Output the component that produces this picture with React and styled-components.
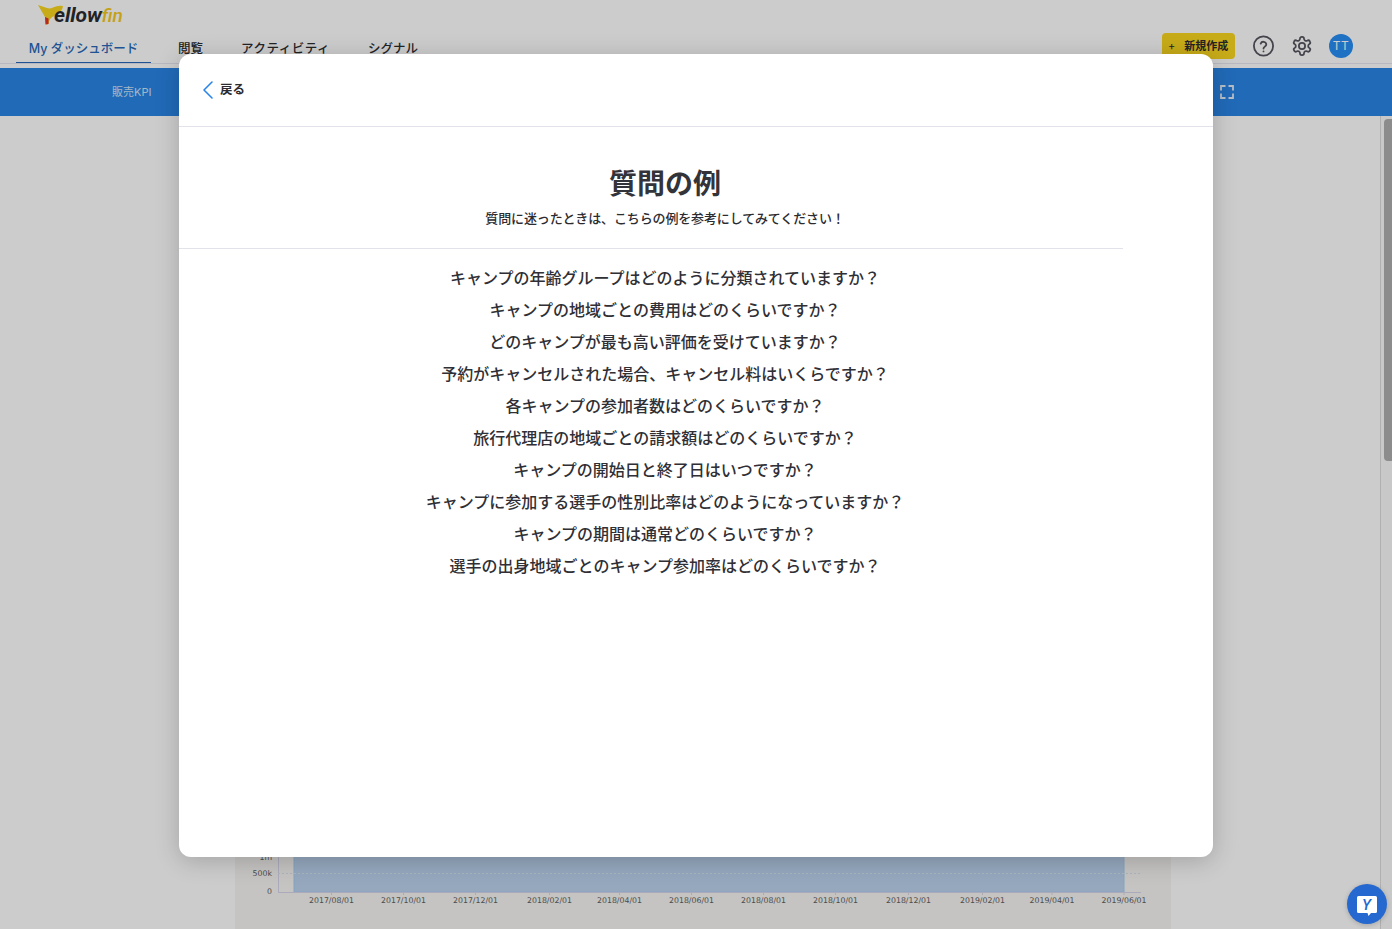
import React from 'react';
import styled, { createGlobalStyle } from 'styled-components';

const Global = createGlobalStyle`
  html, body { margin: 0; height: 100%; background: #fff; overflow: hidden; }
  body { font-family: "Inter", "Noto Sans CJK JP", sans-serif; }
  #root { height: 100%; }
`;
const Page = styled.div`
  height: 929px; display: flex; flex-direction: column; position: relative; overflow: hidden;
`;
const Header = styled.header`
  height: 63px; flex: none; display: flex; justify-content: space-between; border-bottom: 1px solid #e6e6f0; box-sizing: content-box;
`;
const HeaderLeft = styled.div`
  display: flex; flex-direction: column; padding-left: 16px;
`;
const LogoRow = styled.div`
  height: 33px; display: flex; align-items: flex-start; padding: 4px 0 0 22px; box-sizing: border-box;
`;
const LogoWord = styled.span`
  font: italic 700 21px/22px "Roboto", sans-serif; color: #2b2b30; margin-left: -9px; letter-spacing: -0.1px;
`;
const LogoFin = styled.span`
  color: #f6c91b; font-weight: 500; font-size: 19px; letter-spacing: 0;
`;
const Nav = styled.nav`
  display: flex; height: 31px;
`;
const NavItem = styled.a`
  display: flex; align-items: center; justify-content: center; white-space: nowrap;
  font: 500 12.5px/16px "Inter", "Noto Sans CJK JP", sans-serif;
  letter-spacing: ${p => p.$spacing || 0}px;
  color: ${p => p.$active ? '#2768b8' : '#2c2c30'};
  width: ${p => p.$w}px; margin-right: ${p => p.$gap}px; height: 31px; padding-top: 4px; box-sizing: border-box;
  border-bottom: ${p => p.$active ? '1px solid #2768b8' : '1px solid transparent'};
`;
const HeaderRight = styled.div`
  display: flex; align-items: center; gap: 16px; padding: 33px 39px 4px 0; height: 26px;
`;
const NewButton = styled.button`
  height: 26px; width: 73px; border: 0; border-radius: 4px; background: #f9d61f; color: #2c2c30; padding: 0 0 0 6px;
  font: 700 11px/26px "Inter", "Noto Sans CJK JP", sans-serif; display: flex; gap: 9px; align-items: center; margin-right: 2px;
`;
const Plus = styled.span`
  font-weight: 400;
`;
const Avatar = styled.div`
  width: 24px; height: 24px; border-radius: 50%; background: #278ef5; color: #fff; font: 400 12px/24px "Inter", sans-serif; text-align: center; letter-spacing: 0.5px;
`;
const IconWrap = styled.div`
  display: flex; width: 22px; height: 22px; color: #55555f;
`;
const BlueBar = styled.div`
  margin-top: 4px; height: 48px; flex: none; background: #2a85e6; display: flex; align-items: center; justify-content: space-between; padding: 0 158px 0 112px; color: #fff;
`;
const KpiLabel = styled.span`
  font: 400 11px/14px "Inter", "Noto Sans CJK JP", sans-serif; color: #cfe4fa;
`;
const Main = styled.main`
  flex: 1; display: flex; min-height: 0; background: #fff;
`;
const Content = styled.div`
  flex: 1; display: flex; padding-left: 235px;
`;
const ChartPanel = styled.section`
  width: 936px; align-self: flex-end; background: #f7f6f3;
`;
const Scrollbar = styled.div`
  width: 12px; flex: none; box-sizing: border-box; border-left: 1px solid #dcdcdc; background: #fbfbfb; padding: 3px 0 0 3px;
`;
const Thumb = styled.div`
  width: 8px; height: 342px; background: #b0b0b0; border-radius: 4px 0 0 4px;
`;
const Backdrop = styled.div`
  position: absolute; inset: 0; background: rgba(0, 0, 0, 0.2);
`;
const Modal = styled.div`
  position: absolute; left: 179px; top: 54px; width: 1034px; height: 803px; background: #fff; border-radius: 12px;
  box-shadow: 0 4px 24px rgba(0,0,0,0.2); display: flex; flex-direction: column; overflow: hidden;
`;
const ModalTop = styled.div`
  height: 72px; flex: none; display: flex; align-items: center; padding-left: 23px; gap: 6px; border-bottom: 1px solid #e2e2ea;
`;
const BackText = styled.span`
  font: 700 12.5px/16px "Inter", "Noto Sans CJK JP", sans-serif; color: #2c2c30;
`;
const Body = styled.div`
  width: 944px; flex: 1; display: flex; flex-direction: column;
`;
const Intro = styled.div`
  height: 122px; flex: none; box-sizing: border-box; padding: 37px 0 0 28px; text-align: center; border-bottom: 1px solid #e2e2ea;
`;
const Title = styled.h1`
  margin: 0; font: 700 28px/40px "Inter", "Noto Sans CJK JP", sans-serif; color: #33333a;
`;
const Subtitle = styled.p`
  margin: 5px 0 0; font: 500 13px/18px "Inter", "Noto Sans CJK JP", sans-serif; letter-spacing: -0.14px; color: #2c2c30;
`;
const Questions = styled.ul`
  list-style: none; margin: 0; padding: 13px 0 0 28px; text-align: center;
`;
const Question = styled.li`
  font: 500 16px/32px "Inter", "Noto Sans CJK JP", sans-serif; color: #2f2f35; height: 32px;
`;
const ChatButton = styled.button`
  position: absolute; right: 5px; bottom: 5px; width: 40px; height: 40px; border-radius: 50%; border: 0; padding: 0; background: #2568d0;
  display: flex; align-items: center; justify-content: center; box-shadow: 0 1px 5px rgba(0,0,0,.2);
`;

const Logo = () => (
  <svg width="25" height="21" viewBox="0 0 25 21">
    <path d="M0 1 L9 4 Q12 5 15 3.5 Q20 1 25 2 Q24.5 8 16 12 Q11 14 10.5 20 L8 20.5 L7 13 Z" fill="#f9d61f" />
    <path d="M7 13 L10.5 14.5 L10.5 20 L7.5 20.5 Z" fill="#e5332a" />
  </svg>
);
const Help = () => (
  <svg width="22" height="22" viewBox="0.5 0 22 22" fill="none" stroke="currentColor" strokeWidth="1.8" strokeLinecap="round">
    <circle cx="11" cy="11" r="9.6" />
    <path d="M8.2 8.6a2.9 2.9 0 0 1 5.6.9c0 1.9-2.8 2.3-2.8 4" />
    <path d="M11 16.3v.1" />
  </svg>
);
const Gear = () => (
  <svg width="22" height="22" viewBox="0 0 24 24" fill="none" stroke="currentColor" strokeWidth="1.9" strokeLinecap="round" strokeLinejoin="round">
    <circle cx="12" cy="12" r="3.4" />
    <path d="M12.2 2h-.4a2 2 0 0 0-2 2v.2a2 2 0 0 1-1 1.7l-.4.3a2 2 0 0 1-2 0l-.2-.1a2 2 0 0 0-2.7.7l-.2.4a2 2 0 0 0 .7 2.7l.2.1a2 2 0 0 1 1 1.7v.5a2 2 0 0 1-1 1.8l-.2.1a2 2 0 0 0-.7 2.7l.2.4a2 2 0 0 0 2.7.7l.2-.1a2 2 0 0 1 2 0l.4.3a2 2 0 0 1 1 1.7v.2a2 2 0 0 0 2 2h.4a2 2 0 0 0 2-2v-.2a2 2 0 0 1 1-1.7l.4-.3a2 2 0 0 1 2 0l.2.1a2 2 0 0 0 2.7-.7l.2-.4a2 2 0 0 0-.7-2.7l-.2-.1a2 2 0 0 1-1-1.8v-.5a2 2 0 0 1 1-1.7l.2-.1a2 2 0 0 0 .7-2.7l-.2-.4a2 2 0 0 0-2.7-.7l-.2.1a2 2 0 0 1-2 0l-.4-.3a2 2 0 0 1-1-1.7V4a2 2 0 0 0-2-2z" />
  </svg>
);
const Expand = () => (
  <svg width="14" height="14" viewBox="0 0 14 14" fill="none" stroke="#e4eefa" strokeWidth="1.8">
    <path d="M1 5.500V1h4.500M8.500 1H13v4.500M13 8.500V13H8.500M5.500 13H1V8.500" />
  </svg>
);
const Chevron = () => (
  <svg width="12" height="20" viewBox="0 0 12 20" fill="none" stroke="#2a85e6" strokeWidth="1.6" strokeLinecap="round" strokeLinejoin="round">
    <path d="M10 2 2 10l8 8" />
  </svg>
);
const ChatIcon = () => (
  <svg width="22" height="22" viewBox="0 0 22 22" style={{ marginTop: 3 }}>
    <path d="M2.500 1h17a1.500 1.500 0 0 1 1.500 1.500v14a1.500 1.500 0 0 1-1.500 1.500H15l-2.500 3-1-3h-9A1.500 1.500 0 0 1 1 16.500v-14A1.500 1.500 0 0 1 2.500 1z" fill="#fff" />
    <text x="10.5" y="15" textAnchor="middle" fontFamily="Roboto, sans-serif" fontStyle="italic" fontWeight="500" fontSize="15" fill="#2568d0">Y</text>
  </svg>
);

const dates = [
  ['2017/08/01', 96.5], ['2017/10/01', 168.5], ['2017/12/01', 240.5], ['2018/02/01', 314.5], ['2018/04/01', 384.5],
  ['2018/06/01', 456.5], ['2018/08/01', 528.5], ['2018/10/01', 600.5], ['2018/12/01', 673.5], ['2019/02/01', 747.5],
  ['2019/04/01', 817], ['2019/06/01', 889],
];
const Chart = () => (
  <svg width="936" height="813" viewBox="0 0 936 813" style={{ display: 'block' }}>
    <line x1="43.5" y1="700" x2="43.5" y2="776.5" stroke="#d5d5ea" />
    <rect x="59" y="700" width="830" height="76" fill="#bbd3ee" stroke="#a8cdf3" />
    <line x1="43" y1="757.5" x2="906" y2="757.5" stroke="#d5e3ef" strokeDasharray="2 2" />
    <line x1="43" y1="776.5" x2="906" y2="776.5" stroke="#d5d5ea" />
    {dates.map(([d, x]) => <line key={d} x1={x} y1="776" x2={x} y2="779" stroke="#d5d5ea" />)}
    <g fontFamily="DejaVu Sans, sans-serif" fontSize="7.8" fill="#5f5f5f">
      <text x="37" y="744" textAnchor="end">1m</text>
      <text x="37" y="760" textAnchor="end">500k</text>
      <text x="37" y="778" textAnchor="end">0</text>
      {dates.map(([d, x]) => <text key={d} x={x} y="787" textAnchor="middle">{d}</text>)}
    </g>
  </svg>
);

const questions = [
  'キャンプの年齢グループはどのように分類されていますか？',
  'キャンプの地域ごとの費用はどのくらいですか？',
  'どのキャンプが最も高い評価を受けていますか？',
  '予約がキャンセルされた場合、キャンセル料はいくらですか？',
  '各キャンプの参加者数はどのくらいですか？',
  '旅行代理店の地域ごとの請求額はどのくらいですか？',
  'キャンプの開始日と終了日はいつですか？',
  'キャンプに参加する選手の性別比率はどのようになっていますか？',
  'キャンプの期間は通常どのくらいですか？',
  '選手の出身地域ごとのキャンプ参加率はどのくらいですか？',
];

export default function App() {
  return (
    <Page>
      <Global />
      <Header>
        <HeaderLeft>
          <LogoRow>
            <Logo />
            <LogoWord>ellow<LogoFin>fin</LogoFin></LogoWord>
          </LogoRow>
          <Nav>
            <NavItem $active $w={135} $gap={27}>My ダッシュボード</NavItem>
            <NavItem $w={25} $gap={38}>閲覧</NavItem>
            <NavItem $w={89} $gap={38} $spacing={0.5}>アクティビティ</NavItem>
            <NavItem $w={50} $gap={0}>シグナル</NavItem>
          </Nav>
        </HeaderLeft>
        <HeaderRight>
          <NewButton><Plus>+</Plus><span>新規作成</span></NewButton>
          <IconWrap><Help /></IconWrap>
          <IconWrap><Gear /></IconWrap>
          <Avatar>TT</Avatar>
        </HeaderRight>
      </Header>
      <BlueBar>
        <KpiLabel>販売KPI</KpiLabel>
        <Expand />
      </BlueBar>
      <Main>
        <Content>
          <ChartPanel><Chart /></ChartPanel>
        </Content>
        <Scrollbar><Thumb /></Scrollbar>
      </Main>
      <Backdrop />
      <Modal>
        <ModalTop>
          <Chevron />
          <BackText>戻る</BackText>
        </ModalTop>
        <Body>
          <Intro>
            <Title>質問の例</Title>
            <Subtitle>質問に迷ったときは、こちらの例を参考にしてみてください！</Subtitle>
          </Intro>
          <Questions>
            {questions.map(q => <Question key={q}>{q}</Question>)}
          </Questions>
        </Body>
      </Modal>
      <ChatButton><ChatIcon /></ChatButton>
    </Page>
  );
}
